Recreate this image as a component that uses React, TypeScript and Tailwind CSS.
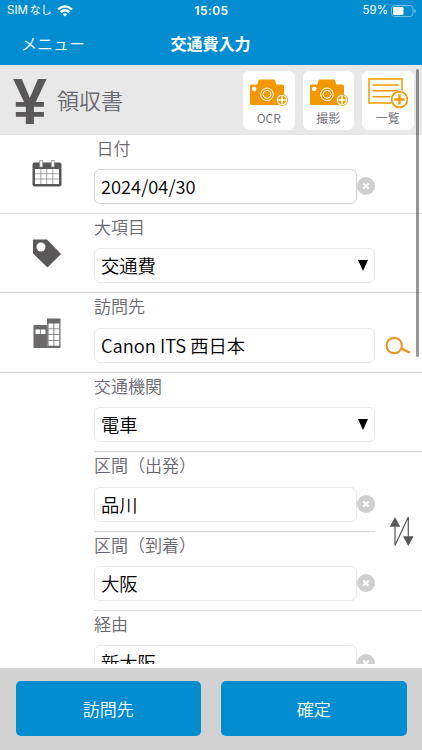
import React from "react";

function Camera() {
  return (
    <svg width="39" height="28" viewBox="0 0 39 28" className="block">
      <path
        d="M2.500 5.500H8.300l1.200-4q.3-1 1.500-1h13.500q1.200 0 1.500 1l1.200 4H33.500q1.500 0 1.500 1.500v17.500q0 1.500-1.500 1.500h-31Q1 26 1 24.500V7q0-1.500 1.500-1.500z"
        fill="#f39800"
      />
      <circle cx="5.200" cy="10" r="2.300" fill="#fff" />
      <circle cx="18" cy="15.300" r="6.300" fill="none" stroke="#fff" strokeWidth="1" />
      <circle cx="18" cy="15.300" r="4" fill="none" stroke="#fff" strokeWidth="1" />
      <circle cx="33" cy="21" r="6" fill="#f39800" />
      <circle cx="33" cy="21" r="4.700" fill="none" stroke="#fff" strokeWidth="1.100" />
      <path d="M33 17.300v7.400M29.300 21h7.400" stroke="#fff" strokeWidth="1.700" />
    </svg>
  );
}

function ListAdd() {
  return (
    <svg width="41" height="31" viewBox="0 0 41 31" className="block" fill="none" stroke="#f39800">
      <path d="M1 1h33v24H1z" strokeWidth="1.500" />
      <path d="M4.500 7h26M4.500 12.800h26M4.500 18.700h18" strokeWidth="1.500" />
      <circle cx="31.500" cy="21.500" r="9.200" fill="#fff" stroke="none" />
      <circle cx="31.500" cy="21.500" r="7.900" strokeWidth="1.700" />
      <path d="M31.500 16.500v10M26.500 21.500h10" strokeWidth="2.500" />
    </svg>
  );
}

function Calendar() {
  return (
    <svg width="30" height="27" viewBox="0 0 30 27" className="block">
      <rect x="0.500" y="2.500" width="29" height="24" rx="2" fill="#595757" />
      <path d="M3 9h24v15H3z" fill="#fff" />
      <path d="M3 13.700h24M3 19h24M8.800 9v15M14.700 9v15M20.800 9v15" stroke="#8c8a8a" strokeWidth=".8" />
      <path d="M7.700.5h3v6.500h-3zM19.300.5h3v6.500h-3z" fill="#fff" stroke="#8c8a8a" strokeWidth=".8" />
    </svg>
  );
}

function Tag() {
  return (
    <svg width="30" height="30" viewBox="0 0 30 30" className="block">
      <path d="M1 .5h14l14 14.500L15.500 28.500 1 14.500z" fill="#595757" />
      <circle cx="9" cy="8" r="4.500" fill="#fff" />
    </svg>
  );
}

function Building() {
  return (
    <svg width="28" height="30" viewBox="0 0 28 30" className="block">
      <path d="M.5 7H14V.5h13.500V30H.5z" fill="#6b696a" />
      <path
        d="M2.500 11.500h4.800v4.500H2.500zM8 11.500h4.500v4.500H8zM15.500 5.500h5v5h-5zM21.300 5.500h5v5h-5zM15.500 11.300h5v5h-5zM21.300 11.300h5v5h-5zM15.500 17h5v5h-5zM21.300 17h5v5h-5zM15.500 22.700h5v5h-5zM21.300 22.700h5v5h-5z"
        fill="#fff"
      />
      <path d="M14.300 5.500V29" stroke="#9b9999" strokeWidth=".6" />
    </svg>
  );
}

function Search() {
  return (
    <svg width="26" height="20" viewBox="0 0 26 20" className="block" fill="none" stroke="#e6982a">
      <circle cx="9.200" cy="9.500" r="7.700" strokeWidth="2.200" />
      <path d="M16 12.300l9 4.300" strokeWidth="2.400" />
    </svg>
  );
}

function Swap() {
  return (
    <svg width="25" height="31" viewBox="0 0 25 31" className="block">
      <path d="M6 8v21.500L19.300 1v22" fill="none" stroke="#595757" strokeWidth="1.200" />
      <path d="M6 1l5.300 9.700H.7zM19.300 30l5.300-9.700H14z" fill="#595757" />
    </svg>
  );
}

function Clear() {
  return (
    <svg width="18" height="18" viewBox="0 0 18 18" className="block shrink-0">
      <circle cx="9" cy="9" r="9" fill="#cfcfcf" />
      <path d="M6.300 6.500l5.400 5M11.700 6.500l-5.400 5" stroke="#fff" strokeWidth="2.200" />
    </svg>
  );
}

function Tile({ label, children }: { label: string; children: React.ReactNode }) {
  return (
    <div className="flex h-[59px] w-[51.500px] shrink-0 flex-col items-center rounded-md bg-white">
      <div className="flex h-[38px] items-end justify-center">{children}</div>
      <span className="text-[12px] leading-[18px] font-[350] text-[#6a6870]">{label}</span>
    </div>
  );
}

type FieldProps = {
  label: string;
  value: string;
  kind?: "clear" | "select" | "plain";
  className?: string;
  labelClass?: string;
  boxClass?: string;
};

function Field({
  label,
  value,
  kind = "plain",
  className = "",
  labelClass = "",
  boxClass = "border-[#e9e9e9]",
}: FieldProps) {
  return (
    <div className={`h-[79.400px] w-[281px] shrink-0 ${className}`}>
      <div className={`h-[34.400px] text-[17px] leading-[26px] font-[350] text-[#6a6870] ${labelClass}`}>{label}</div>
      <div className="flex items-center">
        <div
          className={`flex h-[35px] items-center justify-between rounded-md border bg-white pr-[6px] pl-[6px] text-[18.300px] leading-[33px] font-[350] text-black ${boxClass} ${
            kind === "clear" ? "w-[263.500px]" : "w-[281px]"
          }`}
        >
          <span>{value}</span>
          {kind === "select" && (
            <svg width="10" height="11" viewBox="0 0 10 11">
              <path d="M0 0h10L5 11z" fill="#000" />
            </svg>
          )}
        </div>
        {kind === "clear" && <Clear />}
      </div>
    </div>
  );
}

function Row({ icon, last, children }: { icon: React.ReactNode; last?: React.ReactNode; children: React.ReactNode }) {
  return (
    <div className="flex h-[79.400px] border-b border-[#d6d6d6]">
      <div className="flex w-[94px] shrink-0 justify-center pt-[25px]">{icon}</div>
      {children}
      <div className="flex flex-1 pt-[43px] pl-[9.500px]">{last}</div>
    </div>
  );
}

export default function App() {
  return (
    <div className="relative flex h-[750px] w-[422px] flex-col overflow-hidden bg-white font-['Noto_Sans_CJK_JP',sans-serif]">
      <header className="h-[65.300px] shrink-0 bg-[#028dd1] text-white">
        <div className="grid h-[22px] grid-cols-3 items-center pr-[4px] pl-[7px] font-['Inter','Noto_Sans_CJK_JP',sans-serif] text-[11.500px]">
          <div className="flex items-center gap-[5px]">
            <span>
              SIM<span className="ml-[2px] text-[11px]">なし</span>
            </span>
            <svg width="16" height="12" viewBox="0 0 16 12" fill="none" stroke="#fff" strokeWidth="2.300">
              <path d="M1 4.500Q8-1.800 15 4.500M3.600 7.200q4.400-3.900 8.800 0" />
              <path d="M8 11.500L5.700 9.200q2.300-1.900 4.600 0z" fill="#fff" stroke="none" />
            </svg>
          </div>
          <div className="pr-[2px] text-center text-[12px] font-semibold tracking-[0.400px]">15:05</div>
          <div className="flex items-center justify-end gap-[3px] pr-[2px]">
            <span className="text-[11.500px]">59%</span>
            <svg width="25" height="12" viewBox="0 0 25 12">
              <rect x=".5" y=".5" width="21.500" height="11" rx="3" fill="none" stroke="#74bfe4" />
              <rect x="2" y="2" width="10.500" height="8" rx="1.300" fill="#fff" />
              <path d="M23.300 4q1.500.5 1.500 2t-1.500 2z" fill="#74bfe4" />
            </svg>
          </div>
        </div>
        <div className="grid h-[42px] grid-cols-3 items-center">
          <span className="pl-[21px] text-[16px] font-[350]">メニュー</span>
          <span className="pr-px text-center text-[16px] font-bold">交通費入力</span>
        </div>
      </header>

      <section className="flex h-[69.300px] shrink-0 items-start bg-[#e8e8e8] pt-[5.500px] pr-[8.500px] pl-[13px]">
        <span className="mt-[2px] w-[44px] origin-left scale-x-95 font-['Liberation_Sans',sans-serif] text-[64px] leading-[59px] font-bold text-[#595757]">
          ¥
        </span>
        <span className="flex-1 text-[22px] leading-[57px] font-[350] text-[#6a6870]">領収書</span>
        <div className="flex gap-2">
          <Tile label="OCR">
            <div className="pb-[2px]">
              <Camera />
            </div>
          </Tile>
          <Tile label="撮影">
            <div className="pb-[2px]">
              <Camera />
            </div>
          </Tile>
          <Tile label="一覧">
            <div className="pl-[2px]">
              <ListAdd />
            </div>
          </Tile>
        </div>
      </section>

      <main className="h-[529.400px] shrink-0 overflow-hidden">
        <Row icon={<Calendar />}>
          <Field label="日付" value="2024/04/30" kind="clear" labelClass="pl-[2.500px]" boxClass="border-[#d4d4d4]" />
        </Row>
        <Row icon={<Tag />}>
          <Field label="大項目" value="交通費" kind="select" />
        </Row>
        <Row icon={<Building />} last={<Search />}>
          <Field label="訪問先" value="Canon ITS 西日本" />
        </Row>
        <div className="ml-[94px]">
          <div className="border-b border-[#d6d6d6]">
            <Field label="交通機関" value="電車" kind="select" className="-mb-px" />
          </div>
          <div className="flex items-center border-b border-[#d6d6d6]">
            <div className="-mb-px">
              <Field label="区間（出発）" value="品川" kind="clear" className="border-b border-[#d6d6d6]" />
              <Field label="区間（到着）" value="大阪" kind="clear" />
            </div>
            <div className="pl-[14px]">
              <Swap />
            </div>
          </div>
          <Field label="経由" value="新大阪" kind="clear" />
        </div>
      </main>

      <div className="h-1 shrink-0 bg-white" />
      <footer className="flex flex-1 gap-5 bg-[#d2d2d2] px-[15.500px] pt-[13.300px]">
        <button className="h-[55px] flex-1 rounded-[5px] bg-[#028dd1] text-[17px] font-[350] text-white">訪問先</button>
        <button className="h-[55px] flex-1 rounded-[5px] bg-[#028dd1] text-[17px] font-[350] text-white">確定</button>
      </footer>

      <div className="absolute top-[69px] left-[416px] h-[288px] w-[3px] rounded-full bg-black/40" />
    </div>
  );
}
